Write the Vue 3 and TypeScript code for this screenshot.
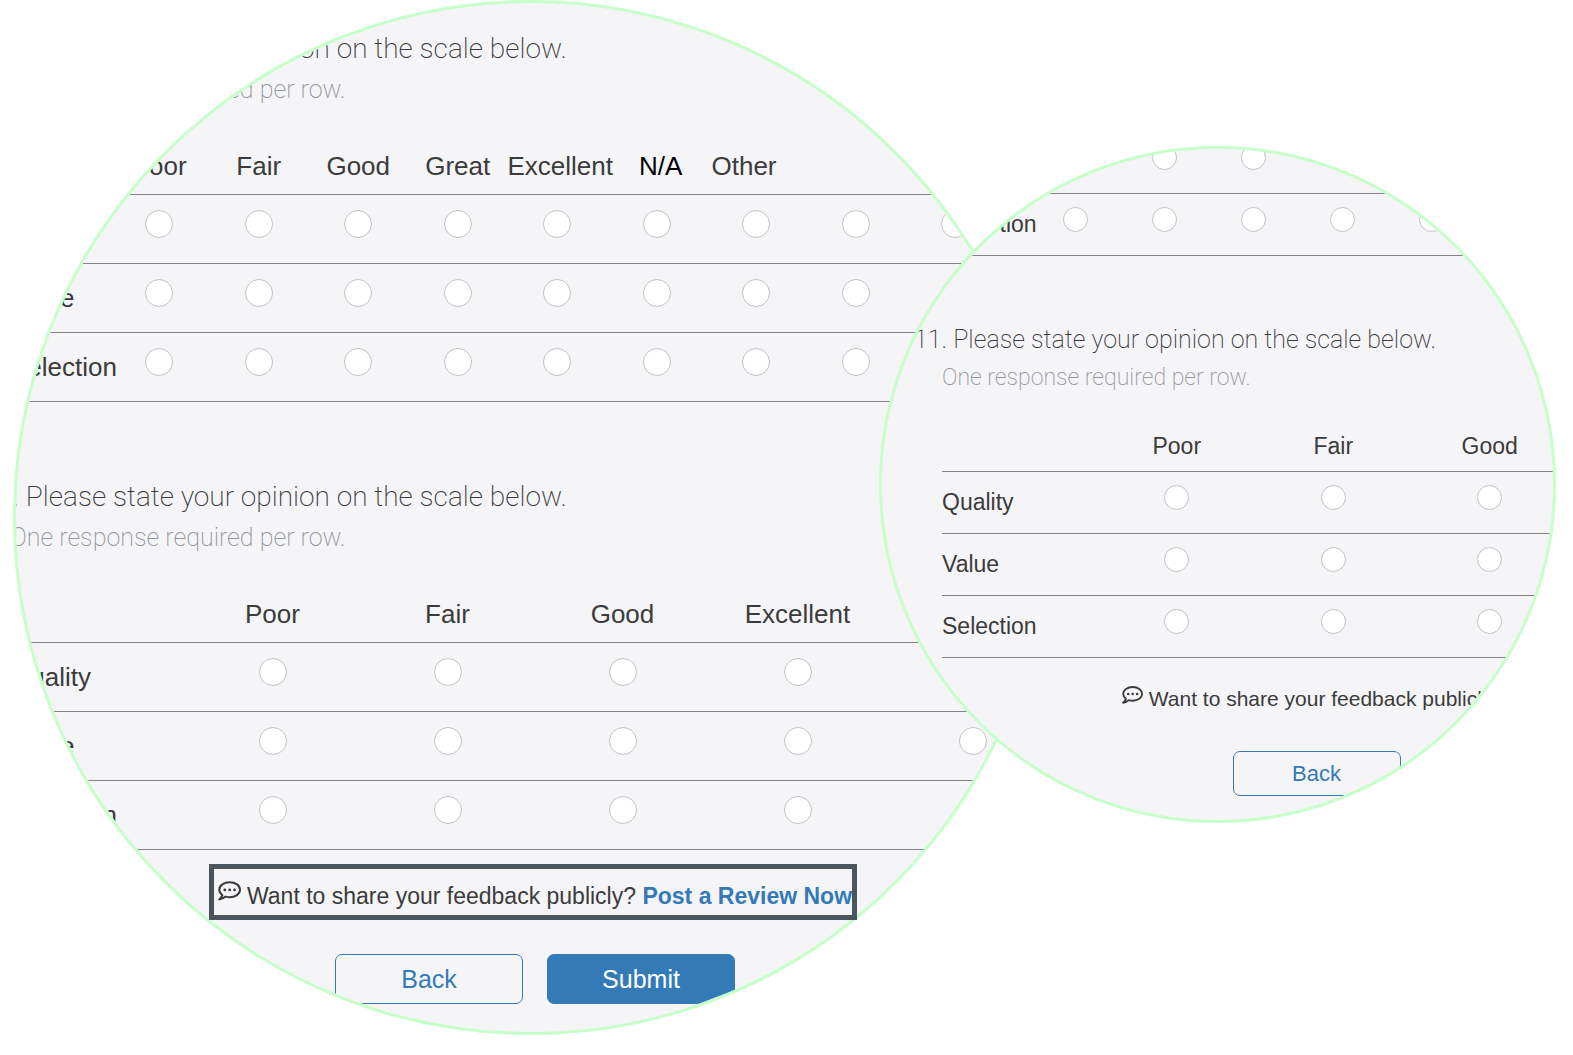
<script setup lang="ts">
interface Question {
  id: string
  number?: string
  rows: string[]
  options: string[]
}

interface Lens {
  size: 'large' | 'small'
  label: string
  questions: Question[]
}

const wideScale = ['Poor', 'Fair', 'Good', 'Great', 'Excellent', 'N/A', 'Other', '', '']
const shortScale = ['Poor', 'Fair', 'Good', 'Excellent', '']
const subjects = ['Quality', 'Value', 'Selection']

const lenses: Lens[] = [
  {
    size: 'large',
    label: 'Survey with review link',
    questions: [
      { id: 'large-10', number: '10.', rows: subjects, options: wideScale },
      { id: 'large-11', number: '11.', rows: subjects, options: shortScale },
    ],
  },
  {
    size: 'small',
    label: 'Survey overview',
    questions: [
      { id: 'small-10', rows: ['Value', 'Selection'], options: wideScale },
      { id: 'small-11', number: '11.', rows: subjects, options: shortScale },
    ],
  },
]

function headClass(option: string) {
  return { 'head-na': option === 'N/A', 'head-other': option === 'Other' }
}
</script>

<template>
  <main class="page">
    <div v-for="lens in lenses" :key="lens.size" class="lens" :class="lens.size">
      <section class="glass" :aria-label="lens.label">
        <form class="survey" @submit.prevent>
          <div v-for="q in lens.questions" :key="q.id" class="question">
            <template v-if="q.number">
              <h2 class="title">{{ q.number }} Please state your opinion on the scale below.</h2>
              <p class="hint">One response required per row.</p>
            </template>
            <table class="scale" :class="q.options.length > 5 ? 'wide' : 'short'">
              <thead v-if="q.number">
                <tr>
                  <td></td>
                  <th v-for="(o, i) in q.options" :key="i" scope="col" :class="headClass(o)">{{ o }}</th>
                </tr>
              </thead>
              <tbody>
                <tr v-for="row in q.rows" :key="row">
                  <th scope="row">{{ row }}</th>
                  <td v-for="(o, i) in q.options" :key="i">
                    <input type="radio" :name="`${q.id}-${row}`" :value="i" :aria-label="`${row}: ${o || i + 1}`" />
                  </td>
                </tr>
              </tbody>
            </table>
          </div>

          <p class="feedback">
            <svg class="bubble" viewBox="0 0 23 20" aria-hidden="true">
              <path
                d="M4.4 14.2C2.6 12.8 1.3 10.9 1.3 8.8 1.3 4.6 5.9 1.2 11.7 1.2S22 4.6 22 8.8s-4.6 7.5-10.3 7.5c-1.5 0-2.9-.2-4.2-.7C5.7 17.3 3.5 18.3 1.2 18.5c1.5-1.2 2.6-2.6 3.2-4.3z"
                fill="none"
                stroke="currentColor"
                stroke-width="2"
                stroke-linejoin="round"
              />
              <circle cx="6.8" cy="8.9" r="1.4" fill="currentColor" />
              <circle cx="11.7" cy="8.9" r="1.4" fill="currentColor" />
              <circle cx="16.6" cy="8.9" r="1.4" fill="currentColor" />
            </svg>
            <span>Want to share your feedback publicly? <a href="#">Post a Review Now</a></span>
          </p>

          <div class="actions">
            <button type="button" class="back">Back</button>
            <button type="submit" class="submit">Submit</button>
          </div>
        </form>
      </section>
      <div v-if="lens.size === 'large'" class="highlight" aria-hidden="true"></div>
    </div>
  </main>
</template>

<style>
body {
  background: #fff;
}
</style>

<style scoped>
.page {
  display: flex;
  align-items: flex-start;
  padding: 0 17px 0 13px;
  font-family: 'Liberation Sans', Arial, sans-serif;
  color: #3b3b3b;
}

.lens {
  position: relative;
  min-width: 0;
  aspect-ratio: 1;
}

.large {
  flex: 1035 1 0;
  --top: 26px;
  --left: -6px;
  --form: 1050px;
  --wide: 995px;
  --title: 28px;
  --title-line: 40px;
  --hint: 25px;
  --hint-line: 42px;
  --table-gap: 40px;
  --text: 26px;
  --line: 30px;
  --head: 44px;
  --row: 69px;
  --label-pad: 19px;
  --radio: 28px;
  --radio-pad: 15px;
  --question-gap: 75px;
  --feedback-gap: 31px;
  --feedback: 23px;
  --icon: 23px;
  --actions-gap: 43px;
  --button-width: 188px;
  --button-height: 50px;
  --button-text: 25px;
  --button-space: 24px;
}

.small {
  flex: 677 1 0;
  margin: 146px 0 0 -169px;
  --top: -17px;
  --left: 60px;
  --form: 939px;
  --wide: 890px;
  --title: 25px;
  --title-line: 36px;
  --hint: 23px;
  --hint-line: 40px;
  --table-gap: 34px;
  --text: 23px;
  --line: 28px;
  --head: 40px;
  --row: 62px;
  --label-pad: 16px;
  --radio: 25px;
  --radio-pad: 13px;
  --question-gap: 66px;
  --feedback-gap: 27px;
  --feedback: 21px;
  --icon: 21px;
  --actions-gap: 38px;
  --button-width: 168px;
  --button-height: 45px;
  --button-text: 22px;
  --button-space: 22px;
}

.glass {
  box-sizing: border-box;
  width: 100%;
  height: 100%;
  overflow: hidden;
  border: 3px solid #c6ffc8;
  border-radius: 50%;
  background: #f5f5f8;
}

.survey {
  display: flow-root;
  width: var(--form);
  margin: var(--top) 0 0 var(--left);
}

.question + .question {
  margin-top: var(--question-gap);
}

.title,
.hint {
  margin: 0;
  font-family: Roboto, 'Liberation Sans', sans-serif;
  white-space: nowrap;
}

.title {
  margin-left: -28px;
  font-size: var(--title);
  font-weight: 200;
  line-height: var(--title-line);
}

.hint {
  font-size: var(--hint);
  font-weight: 200;
  line-height: var(--hint-line);
  color: #94979b;
}

.scale {
  table-layout: fixed;
  border-collapse: separate;
  border-spacing: 0;
  font-size: var(--text);
  line-height: var(--line);
}

.title ~ .scale {
  margin-top: var(--table-gap);
}

.wide {
  width: var(--wide);
}

.short {
  width: 100%;
}

.scale th,
.scale td {
  box-sizing: border-box;
  padding: 0;
  border-bottom: 1px solid #858588;
  font-weight: 400;
  vertical-align: top;
}

.scale thead th,
.scale thead td {
  height: var(--head);
}

.scale tbody th {
  height: var(--row);
  padding-top: var(--label-pad);
  text-align: left;
}

.scale tbody td {
  padding-top: var(--radio-pad);
}

.scale .head-na {
  padding-left: 8px;
  color: #000;
}

.scale .head-other {
  padding-left: 5px;
  text-align: left;
}

input[type='radio'] {
  appearance: none;
  box-sizing: border-box;
  display: block;
  width: var(--radio);
  height: var(--radio);
  margin: 0 auto;
  border: 1px solid #c2c2c4;
  border-radius: 50%;
  background: #fff;
}

.feedback {
  display: flex;
  justify-content: center;
  gap: 6px;
  margin: var(--feedback-gap) 0 0;
  font-size: var(--feedback);
  line-height: var(--line);
  white-space: nowrap;
}

.bubble {
  width: var(--icon);
  height: 20px;
}

.feedback a {
  color: #337ab7;
  font-weight: 700;
  text-decoration: none;
}

.actions {
  display: flex;
  justify-content: center;
  gap: var(--button-space);
  margin-top: var(--actions-gap);
}

button {
  box-sizing: border-box;
  width: var(--button-width);
  height: var(--button-height);
  padding: 0;
  border: 1px solid #337ab7;
  border-radius: 7px;
  font: inherit;
  font-size: var(--button-text);
}

.back {
  background: transparent;
  color: #337ab7;
}

.submit {
  background: #337ab7;
  color: #fff;
}

.highlight {
  position: absolute;
  top: 864px;
  left: 196px;
  box-sizing: border-box;
  width: 648px;
  height: 56px;
  border: 5px solid #4b5560;
  pointer-events: none;
}
</style>
